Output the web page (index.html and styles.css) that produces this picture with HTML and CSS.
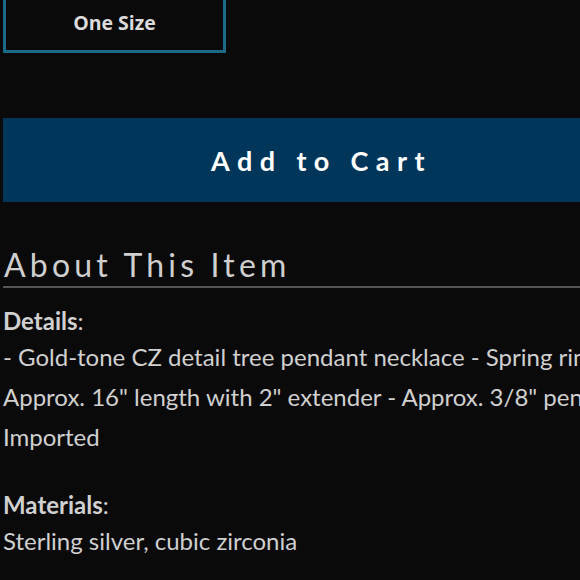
FILE: index.html
```html
<!DOCTYPE html>
<html lang="en">
<head>
<meta charset="utf-8">
<title>Product</title>
<link rel="stylesheet" href="styles.css">
</head>
<body>
<main class="page">
  <div class="sizes">
    <button class="size-option">One Size</button>
  </div>
  <button class="add-to-cart">Add to Cart</button>
  <section class="about">
    <h2 class="about-title">About This Item</h2>
    <div class="attr">
      <div class="attr-label"><strong>Details</strong>:</div>
      <div class="attr-text">- Gold-tone CZ detail tree pendant necklace - Spring ring clasp - Approx. 16" length with 2" extender - Approx. 3/8" pendant - Imported</div>
    </div>
    <div class="attr">
      <div class="attr-label"><strong>Materials</strong>:</div>
      <div class="attr-text">Sterling silver, cubic zirconia</div>
    </div>
  </section>
</main>
</body>
</html>
```
FILE: styles.css
```css
html, body {
  margin: 0;
  padding: 0;
  background: #0a0a0a;
  overflow: hidden;
}
body {
  width: 580px;
  height: 580px;
  font-family: "Lato", "Noto Sans", sans-serif;
  color: #d0d0d0;
}
.page {
  width: 720px;
  padding-left: 3px;
  margin-top: -9px;
}
.sizes {
  display: flex;
}
.size-option {
  width: 223px;
  height: 62px;
  box-sizing: border-box;
  border: 3px solid #1b6a88;
  background: #0a0a0a;
  color: #dcdcdc;
  font-family: "Open Sans", sans-serif;
  font-weight: 700;
  font-size: 19.5px;
  padding: 0;
}
.add-to-cart {
  display: block;
  margin-top: 65px;
  width: 637px;
  height: 84px;
  border: none;
  background: #00365a;
  color: #ffffff;
  font-family: "Lato", sans-serif;
  font-weight: 700;
  font-size: 27px;
  letter-spacing: 7.4px;
  padding: 0;
}
.about {
  margin-top: 43px;
}
.about-title {
  margin: 0;
  font-weight: 400;
  font-size: 32px;
  line-height: 40px;
  letter-spacing: 4.2px;
  color: #cfcfcf;
  padding-left: 1px;
  padding-bottom: 1px;
  border-bottom: 2px solid #555555;
}
.attr {
  font-size: 24px;
}
.attr + .attr {
  margin-top: 32px;
}
.about-title + .attr {
  margin-top: 17px;
}
.attr-label {
  line-height: 32px;
}
.attr-label strong {
  font-weight: 700;
}
.attr-text {
  line-height: 40px;
  width: 700px;
}
```
